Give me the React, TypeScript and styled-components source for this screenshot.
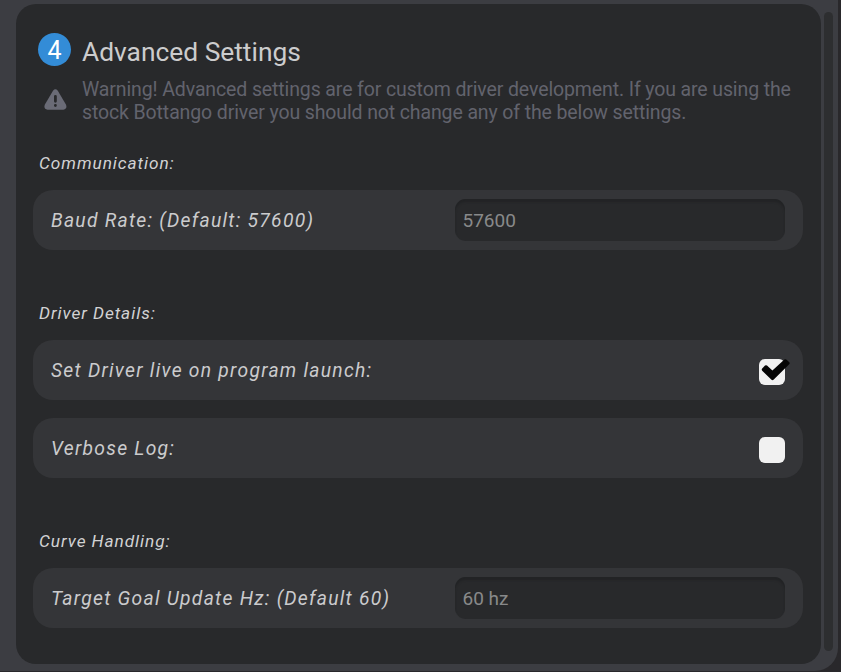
import React, { useState } from "react";
import styled, { createGlobalStyle } from "styled-components";

const GlobalStyle = createGlobalStyle`
  *, *::before, *::after { box-sizing: border-box; }
  body { margin: 0; background: #29282b; font-family: Roboto, sans-serif; }
`;

const Page = styled.div`
  height: 672px;
  width: 841px;
  padding: 0 3px 1px 0;
  overflow: hidden;
  background: #29282b;
`;

const Shell = styled.div`
  display: flex;
  gap: 3px;
  height: 671px;
  padding: 4px 5px 7px 16px;
  background: #3c3d42;
  border-radius: 0 0 23px 0;
`;

const Panel = styled.main`
  width: 805px;
  height: 660px;
  padding: 28px 18px 0 17px;
  background: #28292b;
  border-radius: 20px;
`;

const ScrollTrack = styled.div`
  width: 9px;
  height: 639px;
  margin-top: 8px;
  background: #2d2e30;
  border-radius: 5px;
`;

const Header = styled.header`
  display: grid;
  grid-template-columns: 33px 1fr;
  column-gap: 11px;
  padding-left: 5px;
  height: 92px;
  grid-template-rows: 46px 46px;
`;

const StepBadge = styled.span`
  width: 33px;
  height: 33px;
  margin-top: 1px;
  border-radius: 50%;
  background: #338cd7;
  color: #fff;
  font-size: 25px;
  line-height: 35px;
  text-align: center;
`;

const Title = styled.h1`
  margin: 0;
  color: #cccccd;
  font-size: 26.35px;
  font-weight: 400;
  line-height: 40px;
  letter-spacing: 0;
  white-space: nowrap;
`;

const WarningIcon = styled.svg`
  width: 23px;
  height: 21px;
  margin: 11px 0 0 6px;
`;

const WarningText = styled.p`
  margin: 0;
  color: #62636d;
  font-size: 19.5px;
  line-height: 23px;
  letter-spacing: -0.12px;
  white-space: nowrap;
`;

const Section = styled.section<{ $height: number }>`
  height: ${(p) => p.$height}px;
`;

const SectionTitle = styled.h2`
  height: 66px;
  margin: 0;
  padding: 27px 0 0 6px;
  color: #d2d2d3;
  font-size: 17.25px;
  font-weight: 400;
  font-style: italic;
  line-height: 24px;
  letter-spacing: 0.93px;
`;

const Row = styled.label`
  display: flex;
  align-items: center;
  justify-content: space-between;
  width: 770px;
  height: 60px;
  padding: 0 18px;
  margin-bottom: 18px;
  background: #343538;
  border-radius: 20px;
`;

const RowLabel = styled.span`
  padding-top: 1px;
  color: #cbcbcd;
  font-size: 19.3px;
  font-style: italic;
  line-height: 28px;
  letter-spacing: 1.26px;
  white-space: nowrap;
`;

const TextField = styled.input`
  width: 330px;
  height: 42px;
  padding: 0 7.5px;
  border: 0;
  outline: 0;
  border-radius: 11px;
  background: #28292b;
  box-shadow: inset 0 3px 2px #222325;
  color: #88898a;
  font: 400 19px Roboto, sans-serif;
`;

const CheckButton = styled.button`
  width: 26px;
  height: 26px;
  margin-top: 3px;
  padding: 0;
  border: 0;
  border-radius: 6px;
  background: #f1f1f1;
`;

const CheckMark = styled.svg`
  display: block;
  width: 32px;
  height: 26px;
  overflow: visible;
`;

function Checkbox({ initial = false, label }: { initial?: boolean; label: string }) {
  const [checked, setChecked] = useState(initial);
  return (
    <CheckButton
      type="button"
      role="checkbox"
      aria-label={label}
      aria-checked={checked}
      onClick={() => setChecked(!checked)}
    >
      {checked && (
        <CheckMark viewBox="0 0 32 26" aria-hidden="true">
          <path
            d="M3.2 9.4 6 6.6Q7 5.7 8 6.6L13.4 11.4 25.4.6Q26.6-.2 27.6.7L30.3 3.3Q31.2 4.3 30.2 5.3L14.5 20.8Q13.5 21.7 12.5 20.8L3.2 11.8Q2.2 10.6 3.2 9.4Z"
            fill="#050505"
          />
        </CheckMark>
      )}
    </CheckButton>
  );
}

export default function App() {
  const [baud, setBaud] = useState("57600");
  const [hz, setHz] = useState("60 hz");

  return (
    <>
      <GlobalStyle />
      <Page>
        <Shell>
          <Panel>
            <Header>
              <StepBadge>4</StepBadge>
              <Title>Advanced Settings</Title>
              <WarningIcon viewBox="0 0 23 21" aria-hidden="true">
                <path
                  d="M9 1.7Q11.3-1 13.8 1.7L21.9 15.6Q23.7 19.8 19.4 20.7H3.5Q-.8 19.8 .9 15.6Z"
                  fill="#6a6b76"
                />
                <path d="M11.4 7.3V12.3M11.4 16.3V16.5" stroke="#28292b" strokeWidth="2.8" strokeLinecap="round" />
              </WarningIcon>
              <WarningText>
                Warning! Advanced settings are for custom driver development. If you are using the
                <br />
                stock Bottango driver you should not change any of the below settings.
              </WarningText>
            </Header>

            <Section $height={150}>
              <SectionTitle>Communication:</SectionTitle>
              <Row>
                <RowLabel>Baud Rate: (Default: 57600)</RowLabel>
                <TextField value={baud} onChange={(e) => setBaud(e.target.value)} />
              </Row>
            </Section>

            <Section $height={228}>
              <SectionTitle>Driver Details:</SectionTitle>
              <Row>
                <RowLabel>Set Driver live on program launch:</RowLabel>
                <Checkbox initial label="Set Driver live on program launch" />
              </Row>
              <Row>
                <RowLabel>Verbose Log:</RowLabel>
                <Checkbox label="Verbose Log" />
              </Row>
            </Section>

            <Section $height={150}>
              <SectionTitle>Curve Handling:</SectionTitle>
              <Row>
                <RowLabel>Target Goal Update Hz: (Default 60)</RowLabel>
                <TextField value={hz} onChange={(e) => setHz(e.target.value)} />
              </Row>
            </Section>
          </Panel>
          <ScrollTrack />
        </Shell>
      </Page>
    </>
  );
}
